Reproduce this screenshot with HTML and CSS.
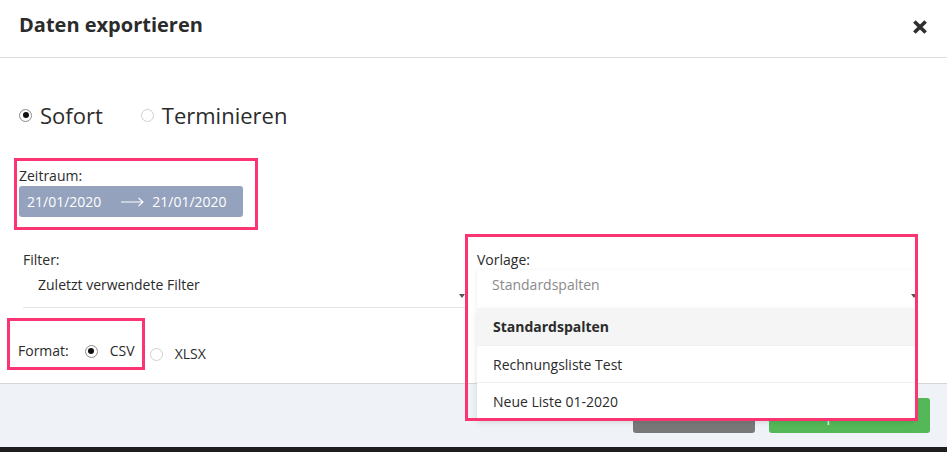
FILE: index.html
```html
<!DOCTYPE html>
<html lang="de">
<head>
<meta charset="utf-8">
<title>Daten exportieren</title>
<link rel="stylesheet" href="styles.css">
</head>
<body>
<div class="modal">
  <div class="modal-header">
    <h1 class="title">Daten exportieren</h1>
    <svg class="close" width="14" height="14" viewBox="0 0 14 14" aria-label="Schließen">
      <path d="M1.4 1.4 L12.6 12.6 M12.6 1.4 L1.4 12.6" stroke="#2f2f2f" stroke-width="3.6" fill="none"/>
    </svg>
  </div>

  <div class="modal-body">
    <div class="mode-row">
      <label class="opt big"><span class="radio on"></span>Sofort</label>
      <label class="opt big"><span class="radio"></span>Terminieren</label>
    </div>

    <div class="mark zeitraum">
      <div class="label">Zeitraum:</div>
      <div class="range">
        <span>21/01/2020</span>
        <svg class="arrow" width="23" height="10" viewBox="0 0 23 10">
          <path d="M0 5 H22 M17.5 1 L22 5 L17.5 9" stroke="#fff" stroke-width="1.1" fill="none"/>
        </svg>
        <span>21/01/2020</span>
      </div>
    </div>

    <div class="fields">
      <div class="field">
        <div class="label">Filter:</div>
        <div class="select underline">
          <span class="value">Zuletzt verwendete Filter</span>
          <span class="caret"></span>
        </div>
      </div>
      <div class="field vorlage">
        <div class="label">Vorlage:</div>
        <div class="combo">
          <div class="select">
            <span class="value placeholder">Standardspalten</span>
            <span class="caret edge"></span>
          </div>
          <ul class="menu">
            <li class="item active">Standardspalten</li>
            <li class="item">Rechnungsliste Test</li>
            <li class="item">Neue Liste 01-2020</li>
          </ul>
        </div>
        <div class="mark-overlay"></div>
      </div>
    </div>

    <div class="format-row">
      <div class="mark format">
        <span class="format-label">Format:</span>
        <label class="opt"><span class="radio on"></span>CSV</label>
      </div>
      <label class="opt xlsx"><span class="radio"></span>XLSX</label>
    </div>
  </div>

  <div class="modal-footer">
    <button class="btn btn-cancel">Abbrechen</button>
    <button class="btn btn-ok">Exportieren</button>
  </div>
</div>
</body>
</html>
```

FILE: styles.css
```css
* { box-sizing: border-box; }

html, body {
  margin: 0;
  padding: 0;
}

body {
  background: #1e1e1e;
  font-family: "Open Sans", "Liberation Sans", sans-serif;
  color: #2b2b2b;
  font-size: 14px;
  width: 947px;
  height: 452px;
  overflow: hidden;
}

.modal {
  width: 947px;
  background: #fff;
}

/* header */
.modal-header {
  display: flex;
  justify-content: space-between;
  align-items: center;
  padding: 11px 20px 18px 19px;
  border-bottom: 1px solid #dedede;
  height: 58px;
}

.title {
  margin: 0;
  font-size: 20px;
  line-height: 28px;
  font-weight: 700;
  color: #2b2b2b;
}

.close {
  display: block;
  margin-top: 4px;
}

/* body */
.modal-body {
  padding: 42px 0 13px 19px;
  height: 325px;
}

.mode-row {
  display: flex;
  align-items: center;
  gap: 38px;
  height: 30px;
}

.opt {
  display: flex;
  align-items: center;
  gap: 12px;
  line-height: 20px;
  color: #2b2b2b;
}

.opt.big {
  font-size: 22px;
  line-height: 30px;
  gap: 8px;
}

.radio {
  width: 13px;
  height: 13px;
  border-radius: 50%;
  border: 1px solid #cfcfcf;
  background: #fff;
  display: grid;
  place-items: center;
  flex: none;
}

.radio.on {
  border-color: #8c8c8c;
}

.radio.on::after {
  content: "";
  width: 6px;
  height: 6px;
  border-radius: 50%;
  background: #111;
}

.label {
  line-height: 20px;
  color: #2b2b2b;
}

/* annotation boxes */
.mark {
  border: 3px solid #fb3571;
}

.zeitraum {
  width: 244px;
  margin: 28px 0 0 -5px;
  padding: 5px 12px 10px 2px;
}

.range {
  display: flex;
  align-items: center;
  height: 31px;
  padding-left: 8px;
  background: #94a2bd;
  border-radius: 3px;
  color: #fff;
}

.arrow {
  display: block;
  margin: 0 8px 0 20px;
}

/* fields */
.fields {
  display: grid;
  grid-template-columns: 442px 441px;
  column-gap: 12px;
  margin-top: 20px;
  padding-left: 4px;
}

.field {
  position: relative;
}

.select {
  display: flex;
  justify-content: space-between;
  height: 38px;
  padding: 5px 0 0 15px;
  background: #fff;
}

.select.underline {
  border-bottom: 1px solid #e4e4e4;
}

.value {
  line-height: 20px;
}

.placeholder {
  color: #8a8a8a;
}

.caret {
  align-self: flex-end;
  margin-bottom: 9px;
  width: 0;
  height: 0;
  border-left: 3.5px solid transparent;
  border-right: 3.5px solid transparent;
  border-top: 4px solid #555;
}

.caret.edge {
  margin-bottom: 10px;
  margin-right: -2px;
}

.combo {
  position: relative;
  margin-right: 3px;
  box-shadow: 0 1px 4px rgba(0, 0, 0, 0.1);
  z-index: 10;
}

.menu {
  position: absolute;
  top: 38px;
  left: 0;
  right: 0;
  margin: 0;
  padding: 0;
  list-style: none;
  background: #fff;
  box-shadow: 0 3px 6px rgba(0, 0, 0, 0.12);
}

.item {
  height: 37px;
  line-height: 37px;
  padding-left: 16px;
  border-top: 1px solid #f1f1f1;
  color: #2b2b2b;
}

.item:first-child {
  border-top: 0;
}

.item.active {
  background: #f5f5f5;
  font-weight: 700;
}

.mark-overlay {
  position: absolute;
  top: -16px;
  left: -12px;
  right: 0;
  height: 187px;
  border: 3px solid #fb3571;
  z-index: 11;
  pointer-events: none;
}

/* format */
.format-row {
  display: flex;
  align-items: flex-end;
  margin-top: 10px;
  margin-left: -12px;
}

.format {
  display: flex;
  align-items: center;
  gap: 16px;
  padding: 20px 7px 6px 8px;
  height: 52px;
}

.format-label {
  line-height: 20px;
}

.xlsx {
  margin-left: 5px;
  margin-bottom: 6px;
}

/* footer */
.modal-footer {
  display: flex;
  justify-content: flex-end;
  gap: 14px;
  height: 64px;
  padding: 14px 17px 14px 0;
  background: #eff2f7;
  border-top: 1px solid #d6d6d6;
}

.btn {
  height: 35px;
  border: 0;
  border-radius: 3px;
  color: #fff;
  font-family: "Open Sans", "Liberation Sans", sans-serif;
  font-size: 14px;
  padding: 0;
}

.btn-cancel {
  width: 122px;
  background: #787878;
}

.btn-ok {
  width: 161px;
  background: #54b858;
}
```
